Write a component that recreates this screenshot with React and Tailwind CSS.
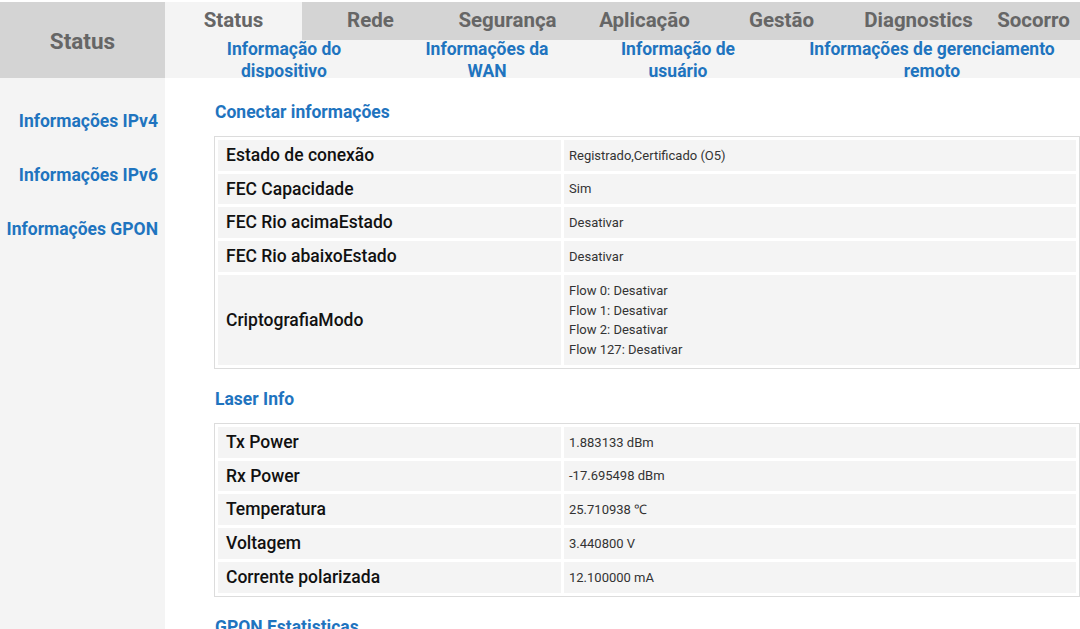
import React from "react";

const tabs = ["Status", "Rede", "Segurança", "Aplicação", "Gestão", "Diagnostics", "Socorro"];

const subNav = [
  { label: "Informação do dispositivo", cls: "w-[150px] ml-[209px]" },
  { label: "Informações da WAN", cls: "w-[140px] ml-[58px]" },
  { label: "Informação de usuário", cls: "w-[140px] ml-[51px]" },
  { label: "Informações de gerenciamento remoto", cls: "w-[262px] ml-[53px]" },
];

const sideLinks = ["Informações IPv4", "Informações IPv6", "Informações GPON"];

// row heights alternate a little, like the original rendering
const connectRows = [
  ["Estado de conexão", ["Registrado,Certificado (O5)"], "h-[31px]"],
  ["FEC Capacidade", ["Sim"], "h-[30px]"],
  ["FEC Rio acimaEstado", ["Desativar"], "h-[31px]"],
  ["FEC Rio abaixoEstado", ["Desativar"], "h-[31px]"],
  ["CriptografiaModo", ["Flow 0: Desativar", "Flow 1: Desativar", "Flow 2: Desativar", "Flow 127: Desativar"], ""],
];

const laserRows = [
  ["Tx Power", ["1.883133 dBm"], "h-[31px]"],
  ["Rx Power", ["-17.695498 dBm"], "h-[30px]"],
  ["Temperatura", ["25.710938 ℃"], "h-[31px]"],
  ["Voltagem", ["3.440800 V"], "h-[31px]"],
  ["Corrente polarizada", ["12.100000 mA"], "h-[31px]"],
];

function InfoTable({ rows }) {
  return (
    <table className="w-[866px] border border-[#dcdcdc] border-separate border-spacing-[3px]">
      <tbody>
        {rows.map(([label, values, h]) => (
          <tr key={label}>
            <td className={`w-[343px] ${h} bg-[#f4f4f4] pl-[8px] text-[17.5px] font-medium text-[#111]`}>
              {label}
            </td>
            <td className={`${h} bg-[#f4f4f4] pl-[5px] text-[13px] text-[#333] ${values.length > 1 ? "py-[6px]" : ""}`}>
              {values.map((v) => (
                <div key={v} className={values.length > 1 ? "leading-[19.5px]" : ""}>
                  {v}
                </div>
              ))}
            </td>
          </tr>
        ))}
      </tbody>
    </table>
  );
}

export default function App() {
  return (
    <div className="min-h-screen bg-white pt-[2px] font-['Roboto',sans-serif] overflow-hidden">
      {/* header */}
      <div className="flex">
        <div className="w-[165px] h-[76px] shrink-0 bg-[#d4d4d4] flex items-center justify-center pt-[4px] text-[22.5px] font-bold text-[#666]">
          Status
        </div>
        <div className="flex-1 min-w-0">
          <div className="flex h-[38px] bg-[#d4d4d4]">
            {tabs.map((t, i) => (
              <div
                key={t}
                className={`${i === tabs.length - 1 ? "flex-1" : "w-[137px]"} shrink-0 flex items-center justify-center pb-[2px] text-[20.5px] font-bold text-[#666] whitespace-nowrap ${i === 0 ? "bg-[#f4f4f4]" : ""}`}
              >
                {t}
              </div>
            ))}
          </div>
          <div className="h-[38px] bg-[#f4f4f4] overflow-hidden">
            <div className="flex mt-[-2px] -ml-[165px]">
              {subNav.map((s) => (
                <div
                  key={s.label}
                  className={`${s.cls} shrink-0 text-center text-[17.5px] font-bold leading-[22px] text-[#1f74bf]`}
                >
                  {s.label}
                </div>
              ))}
            </div>
          </div>
        </div>
      </div>

      {/* body */}
      <div className="flex min-h-[560px]">
        <div className="w-[165px] shrink-0 bg-[#f4f4f4] pt-[31px] pr-[7px] flex flex-col items-end gap-[30px]">
          {sideLinks.map((l) => (
            <div key={l} className="text-[17.5px] font-bold leading-[24px] text-[#1f74bf] whitespace-nowrap">
              {l}
            </div>
          ))}
        </div>
        <div className="flex-1 pl-[49px] pt-[22px]">
          <h2 className="text-[17.5px] font-bold leading-[24px] text-[#1f74bf] pl-[1px]">Conectar informações</h2>
          <div className="mt-[12px]">
            <InfoTable rows={connectRows} />
          </div>
          <h2 className="mt-[18px] text-[17.5px] font-bold leading-[24px] text-[#1f74bf] pl-[1px]">Laser Info</h2>
          <div className="mt-[12px]">
            <InfoTable rows={laserRows} />
          </div>
          <h2 className="mt-[18px] text-[17.5px] font-bold leading-[24px] text-[#1f74bf] pl-[1px]">GPON Estatisticas</h2>
        </div>
      </div>
    </div>
  );
}
